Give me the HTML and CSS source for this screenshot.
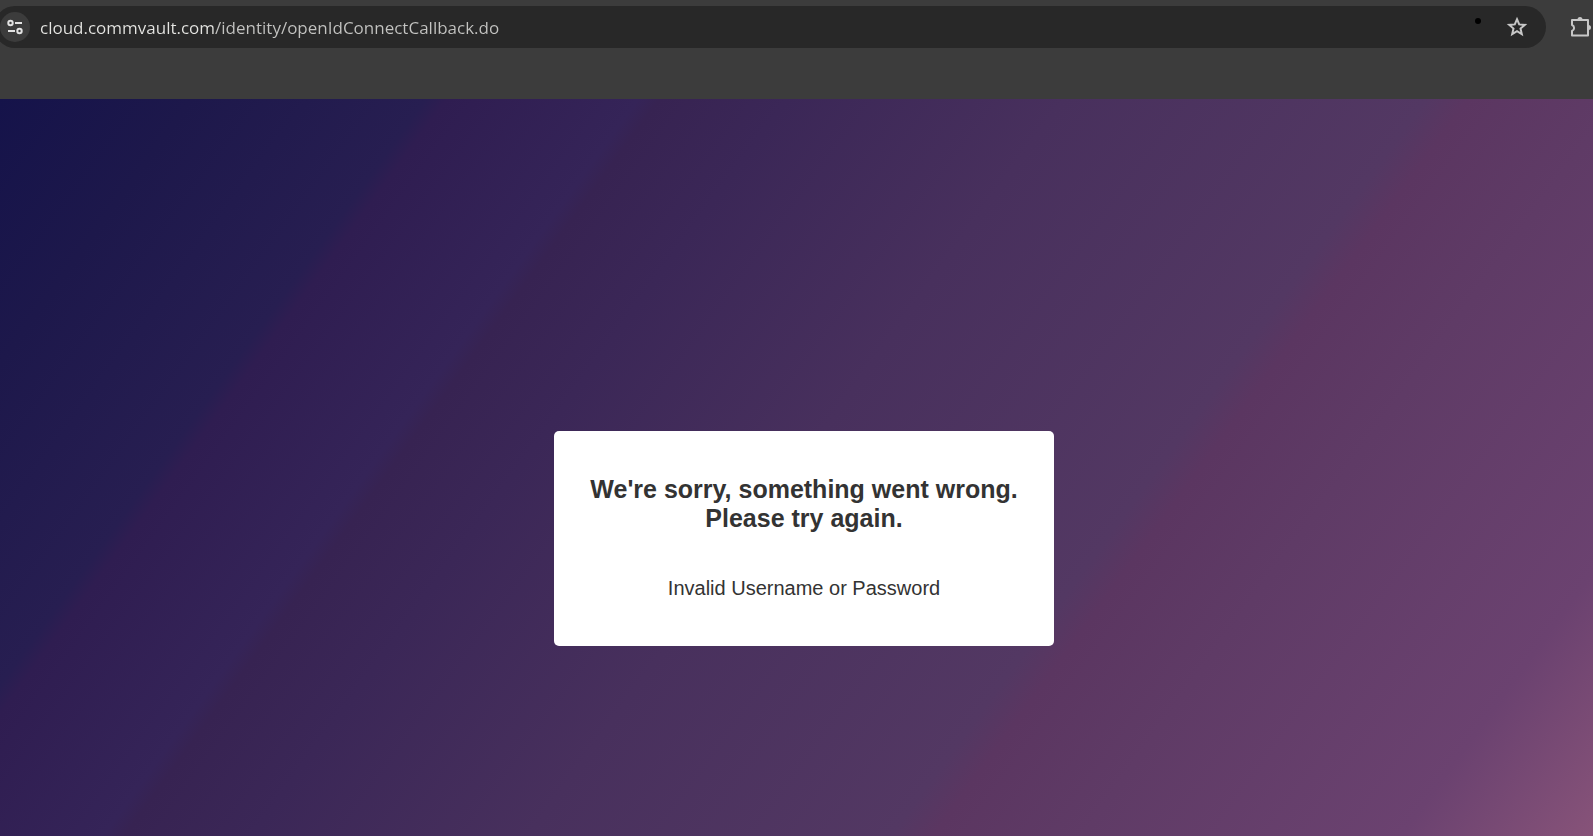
FILE: index.html
```
<!DOCTYPE html>
<html lang="en">
<head>
    <meta charset="UTF-8">
    <meta name="viewport" content="width=device-width, initial-scale=1.0">
    <title>Sign in error</title>
    <link rel="stylesheet" href="styles.css">
</head>
<body>
    <!-- Browser toolbar -->
    <header class="toolbar">
        <div class="address-bar">
            <button class="site-btn" type="button" aria-label="View site information">
                <svg width="18" height="18" viewBox="0 0 18 18" fill="none" stroke="currentColor" stroke-width="2">
                    <circle cx="4.5" cy="5" r="2.2"/>
                    <path d="M9 5h7M2 13h7"/>
                    <circle cx="13.5" cy="13" r="2.2"/>
                </svg>
            </button>
            <input class="url-input" type="text" aria-label="Address" spellcheck="false" value="cloud.commvault.com/identity/openIdConnectCallback.do">
            <span class="dot"></span>
            <button class="icon-btn" type="button" aria-label="Bookmark this page">
                <svg width="22" height="22" viewBox="0 0 22 22" fill="none" stroke="currentColor" stroke-width="2">
                    <path d="M11 3.2l2.2 5.2 5.6.5-4.3 3.7 1.3 5.5-4.8-2.9-4.8 2.9 1.3-5.5-4.3-3.7 5.6-.5z"/>
                </svg>
            </button>
        </div>
        <button class="icon-btn extensions-btn" type="button" aria-label="Extensions">
            <svg width="22" height="22" viewBox="0 0 22 22" fill="none" stroke="currentColor" stroke-width="2" stroke-linejoin="round">
                <path d="M2 4h16v15.500h-16v-4.500a3.200 3.200 0 0 0 0-6z"/>
                <path d="M8.500 3.500a1.500 1.500 0 0 1 3 0zM18.500 10a1.500 1.500 0 0 1 0 3z" fill="currentColor"/>
            </svg>
        </button>
    </header>

    <!-- Error message -->
    <main class="content">
        <div class="error-card">
            <h1>We're sorry, something went wrong.<br>Please try again.</h1>
            <p>Invalid Username or Password</p>
        </div>
    </main>
</body>
</html>
```
FILE: styles.css
```
* {
    box-sizing: border-box;
}

body {
    margin: 0;
    min-height: 100vh;
    display: flex;
    flex-direction: column;
    font-family: Arial, "Liberation Sans", sans-serif;
    background: #3c3c3c;
}

/* Browser toolbar */
.toolbar {
    display: flex;
    align-items: flex-start;
    padding: 6px 0 51px;
    overflow: hidden;
}

.address-bar {
    flex: 1;
    display: flex;
    align-items: center;
    height: 42px;
    margin-left: -6px;
    padding: 0 18px 0 6px;
    border-radius: 21px;
    background: #282828;
}

button {
    display: flex;
    align-items: center;
    justify-content: center;
    padding: 0;
    border: none;
    background: none;
    color: #c7c7c7;
    cursor: pointer;
}

.site-btn {
    width: 30px;
    height: 30px;
    border-radius: 50%;
    background: #3c3c3c;
    color: #e3e3e3;
}

/* Host is brighter than the rest of the address */
.url-input {
    flex: 1;
    min-width: 0;
    margin-left: 10px;
    padding: 2px 0 0;
    border: none;
    outline: none;
    font-family: "Segoe UI", "Open Sans", sans-serif;
    font-size: 17px;
    line-height: 24px;
    background: linear-gradient(to right, #e6e6e3 175px, #c4c4c2 175px);
    -webkit-background-clip: text;
    background-clip: text;
    color: transparent;
}

.dot {
    width: 6px;
    height: 6px;
    margin: 0 25px 12px 0;
    border-radius: 50%;
    background: #000;
}

.icon-btn {
    width: 22px;
    height: 42px;
}

.extensions-btn {
    margin: 0 1px 0 24px;
}

/* Page */
.content {
    flex: 1;
    display: flex;
    justify-content: center;
    align-items: flex-start;
    padding: 332px 0 40px 15px;
    background: linear-gradient(126deg, #15134a 0%, #1d184b 9%, #271e51 20%, #2f1d51 21%, #352458 30%, #372352 31%, #3b2757 37%, #48305d 50%, #533863 67%, #5b3661 69%, #5f3b66 76%, #6b4270 91%, #875379 100%);
}

.error-card {
    width: 500px;
    padding: 44px 20px 46px;
    border-radius: 5px;
    background: #fff;
    color: #333;
    text-align: center;
}

.error-card h1 {
    margin: 0 0 43px;
    font-size: 25px;
    line-height: 29px;
}

.error-card p {
    margin: 0;
    font-size: 20px;
    line-height: 24px;
}
```
